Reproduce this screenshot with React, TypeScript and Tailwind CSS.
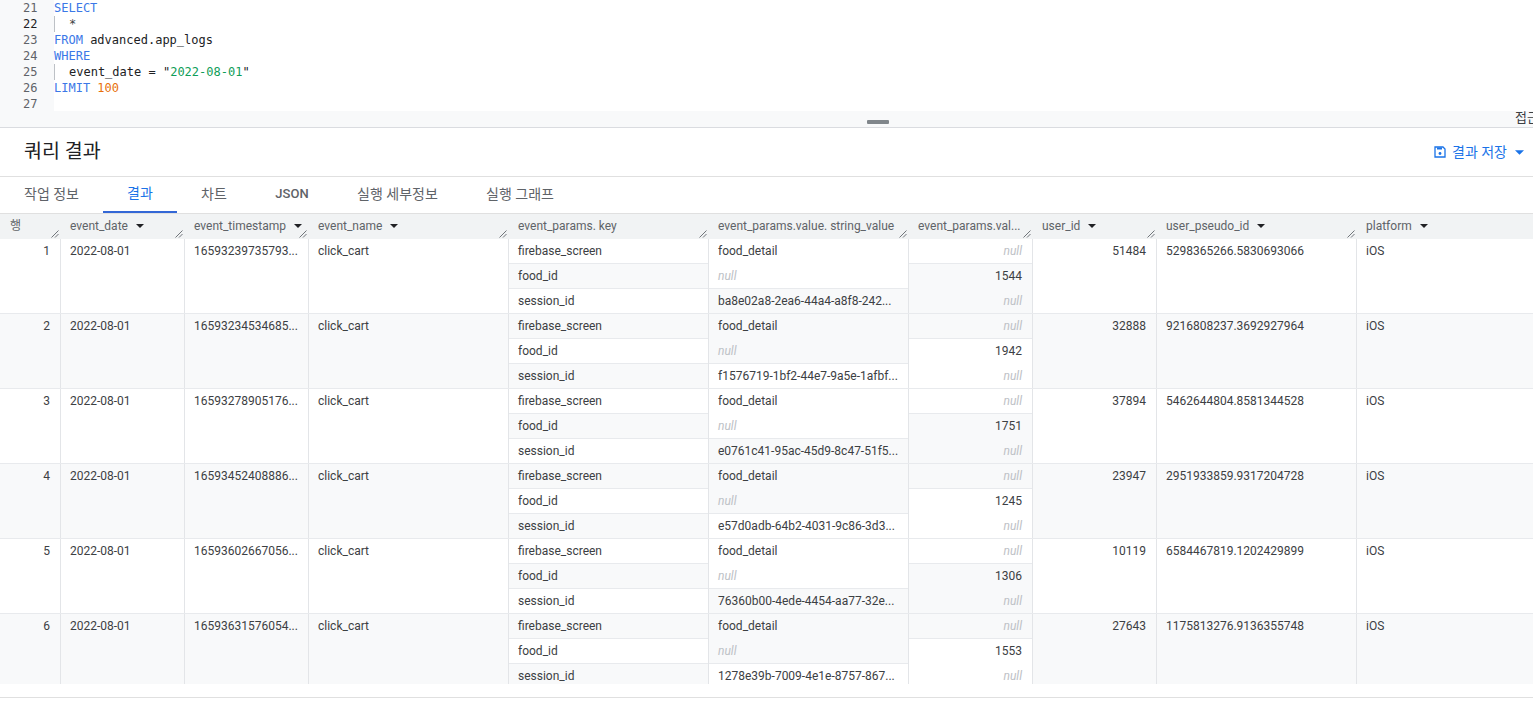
const sans = "font-['Roboto','Noto_Sans_CJK_KR',sans-serif]";

const columns = [
  { label: "행", width: "w-[60px]" },
  { label: "event_date", width: "w-[124px]", sort: true },
  { label: "event_timestamp", width: "w-[124px]", sort: true },
  { label: "event_name", width: "w-[200px]", sort: true },
  { label: "event_params. key", width: "w-[200px]" },
  { label: "event_params.value. string_value", width: "w-[200px]" },
  { label: "event_params.val...", width: "w-[124px]" },
  { label: "user_id", width: "w-[124px]", sort: true },
  { label: "user_pseudo_id", width: "w-[200px]", sort: true },
  { label: "platform", width: "w-[200px]", sort: true },
];

const tabs = [
  { label: "작업 정보", width: "w-[103px]" },
  { label: "결과", width: "w-[74px]", active: true },
  { label: "차트", width: "w-[74px]" },
  { label: "JSON", width: "w-[82px]" },
  { label: "실행 세부정보", width: "w-[129px]" },
  { label: "실행 그래프", width: "w-[116px]" },
];

const rows = [
  { n: 1, ts: "16593239735793...", session: "ba8e02a8-2ea6-44a4-a8f8-242...", value: 1544, user: 51484, pseudo: "5298365266.5830693066" },
  { n: 2, ts: "16593234534685...", session: "f1576719-1bf2-44e7-9a5e-1afbf...", value: 1942, user: 32888, pseudo: "9216808237.3692927964" },
  { n: 3, ts: "16593278905176...", session: "e0761c41-95ac-45d9-8c47-51f5...", value: 1751, user: 37894, pseudo: "5462644804.8581344528" },
  { n: 4, ts: "16593452408886...", session: "e57d0adb-64b2-4031-9c86-3d3...", value: 1245, user: 23947, pseudo: "2951933859.9317204728" },
  { n: 5, ts: "16593602667056...", session: "76360b00-4ede-4454-aa77-32e...", value: 1306, user: 10119, pseudo: "6584467819.1202429899" },
  { n: 6, ts: "16593631576054...", session: "1278e39b-7009-4e1e-8757-867...", value: 1553, user: 27643, pseudo: "1175813276.9136355748" },
];

function Caret({ className }: { className: string }) {
  return (
    <svg viewBox="0 0 10 5" className={className} fill="currentColor">
      <path d="M0 0h10L5 5z" />
    </svg>
  );
}

function HeaderCell({ label, width, sort }: { label: string; width: string; sort?: boolean }) {
  return (
    <div className={`relative flex h-full shrink-0 items-center pl-[10px] pb-[2px] text-[#5f6368] ${width}`}>
      <span className="whitespace-nowrap">{label}</span>
      {sort && <Caret className="ml-[8px] h-[4px] w-[8px] text-[#202124]" />}
      <svg viewBox="0 0 8 8" className="absolute bottom-[1px] right-[1px] h-[8px] w-[8px] text-[#70757a]" stroke="currentColor" fill="none">
        <path d="M0.5 7.5L7.5 0.5M4 7.5L7.5 4" />
      </svg>
    </div>
  );
}

function TopCell({ children, width, right, first }: { children: React.ReactNode; width: string; right?: boolean; first?: boolean }) {
  return (
    <div
      className={`shrink-0 pr-[10px] leading-[25px] whitespace-nowrap ${first ? "" : "border-l border-[#e3e5e8] pl-[9px]"} ${
        right ? "text-right" : ""
      } ${width}`}
    >
      {children}
    </div>
  );
}

function SubCell({ children, shaded, line, right, last }: { children: React.ReactNode; shaded: boolean; line?: boolean; right?: boolean; last?: boolean }) {
  return (
    <div
      className={`pl-[9px] pr-[10px] leading-[25px] whitespace-nowrap ${last ? "h-[24px]" : "h-[25px]"} ${
        shaded ? "bg-[#f8f9fa]" : "bg-white"
      } ${line ? "border-b border-[#e8eaed]" : ""} ${right ? "text-right" : ""}`}
    >
      {children}
    </div>
  );
}

function Null() {
  return <span className="italic text-[#bdc1c6]">null</span>;
}

function Row({ row }: { row: (typeof rows)[number] }) {
  const even = row.n % 2 === 0;
  return (
    <div className={`flex h-[75px] border-b border-[#e8eaed] ${even ? "bg-[#f8f9fa]" : "bg-white"}`}>
      <TopCell width="w-[60px]" right first>
        {row.n}
      </TopCell>
      <TopCell width="w-[124px]">2022-08-01</TopCell>
      <TopCell width="w-[124px]">{row.ts}</TopCell>
      <TopCell width="w-[200px]">click_cart</TopCell>

      <div className="w-[200px] shrink-0 border-l border-[#e3e5e8]">
        <SubCell shaded={even} line>firebase_screen</SubCell>
        <SubCell shaded={!even} line>food_id</SubCell>
        <SubCell shaded={even} last>session_id</SubCell>
      </div>
      <div className="w-[200px] shrink-0 border-l border-[#e3e5e8]">
        <SubCell shaded={even}>food_detail</SubCell>
        <SubCell shaded={even} line>
          <Null />
        </SubCell>
        <SubCell shaded={!even} last>{row.session}</SubCell>
      </div>
      <div className="w-[124px] shrink-0 border-l border-[#e3e5e8]">
        <SubCell shaded={even} line right>
          <Null />
        </SubCell>
        <SubCell shaded={!even} right>{row.value}</SubCell>
        <SubCell shaded={!even} right last>
          <Null />
        </SubCell>
      </div>

      <TopCell width="w-[124px]" right>
        {row.user}
      </TopCell>
      <TopCell width="w-[200px]">{row.pseudo}</TopCell>
      <TopCell width="w-[177px]">iOS</TopCell>
    </div>
  );
}

const code = [
  { n: 21, body: <span className="text-[#3b78e7]">SELECT</span> },
  { n: 22, guide: true, body: <span className="pl-[14px] text-[#3c4043]">*</span> },
  {
    n: 23,
    body: (
      <>
        <span className="text-[#3b78e7]">FROM</span> <span className="text-[#202124]">advanced.app_logs</span>
      </>
    ),
  },
  { n: 24, body: <span className="text-[#3b78e7]">WHERE</span> },
  {
    n: 25,
    guide: true,
    body: (
      <span className="pl-[14px] text-[#202124]">
        event_date = "<span className="text-[#0f9d58]">2022-08-01</span>"
      </span>
    ),
  },
  {
    n: 26,
    body: (
      <>
        <span className="text-[#3b78e7]">LIMIT</span> <span className="text-[#e8710a]">100</span>
      </>
    ),
  },
  { n: 27, body: null },
];

export default function App() {
  return (
    <div className={`h-[701px] w-[1533px] overflow-hidden bg-white ${sans}`}>
      <div className="h-[111px] font-['DejaVu_Sans_Mono',monospace] text-[12px] leading-[16px]">
        {code.map((line) => (
          <div key={line.n} className="flex h-[16px]">
            <div className={`w-[54px] shrink-0 bg-[#f8f9fa] pl-[23px] ${line.n === 22 ? "text-[#202124]" : "text-[#5f6368]"}`}>
              {line.n}
            </div>
            <div className={`whitespace-pre ${line.guide ? "border-l border-[#bdc1c6]" : ""}`}>{line.body}</div>
          </div>
        ))}
      </div>

      <div className="relative flex h-[17px] justify-end overflow-hidden border-b border-[#dadce0] bg-[#f8f9fa]">
        <span className="absolute left-[867px] top-[9px] h-[4px] w-[22px] rounded-[1px] bg-[#80868b]" />
        <span className="w-[18px] shrink-0 whitespace-nowrap text-[13px] leading-[14px] text-[#3c4043]">접근</span>
      </div>

      <div className="flex h-[49px] items-center justify-between border-b border-[#e0e0e0] pl-6 pr-[9px]">
        <h2 className="text-[19.5px] font-normal text-[#202124]">쿼리 결과</h2>
        <div className="flex items-center text-[14px] text-[#1a73e8]">
          <svg viewBox="0 0 12 12" className="h-[12px] w-[12px]" fill="none" stroke="currentColor" strokeWidth="1.3">
            <path d="M1 1h8l2 2v8H1z" />
            <path d="M3 1.5h5v2H3z" fill="currentColor" stroke="none" />
            <circle cx="6" cy="7.5" r="1.4" fill="currentColor" stroke="none" />
          </svg>
          <span className="ml-[6px]">결과 저장</span>
          <Caret className="ml-[8px] h-[5px] w-[9px]" />
        </div>
      </div>

      <div className="flex h-[36px] text-[14px] text-[#5f6368]">
        {tabs.map((tab) => (
          <div
            key={tab.label}
            className={`flex items-center justify-center pb-[2px] whitespace-nowrap ${tab.width} ${
              tab.active ? "border-b-2 border-[#3367d6] text-[#1a73e8]" : ""
            } ${tab.label === "JSON" ? "text-[13px] font-medium" : ""}`}
          >
            {tab.label}
          </div>
        ))}
      </div>

      <div className="h-[471px] overflow-hidden text-[12px] text-[#3c4043]">
        <div className="flex h-[26px] border-t border-[#e0e0e0] bg-[#f1f3f4]">
          {columns.map((c) => (
            <HeaderCell key={c.label} label={c.label} width={c.width} sort={c.sort} />
          ))}
        </div>
        {rows.map((row) => (
          <Row key={row.n} row={row} />
        ))}
      </div>

      <div className="mt-[13px] border-t border-[#e0e0e0]" />
    </div>
  );
}
